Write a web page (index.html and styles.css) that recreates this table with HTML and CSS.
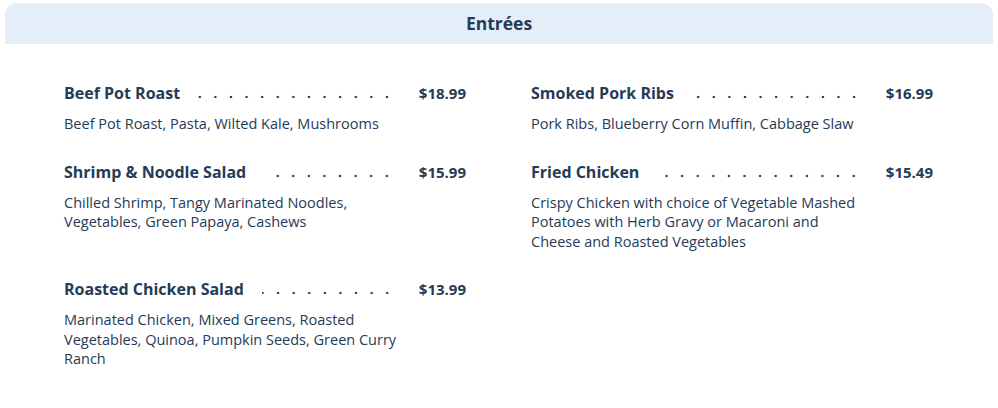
FILE: index.html
```html
<!DOCTYPE html>
<html lang="en">
<head>
    <meta charset="UTF-8">
    <meta name="viewport" content="width=device-width, initial-scale=1.0">
    <title>Entrées</title>
    <link rel="stylesheet" href="styles.css">
</head>
<body>
    <section class="menu-section">
        <header class="section-header">
            <h2>Entrées</h2>
        </header>
        <div class="menu-grid">
            <div class="menu-item">
                <div class="item-line">
                    <span class="item-name">Beef Pot Roast</span>
                    <span class="leader"></span>
                    <span class="item-price">$18.99</span>
                </div>
                <p class="item-desc">Beef Pot Roast, Pasta, Wilted Kale, Mushrooms</p>
            </div>
            <div class="menu-item">
                <div class="item-line">
                    <span class="item-name">Smoked Pork Ribs</span>
                    <span class="leader"></span>
                    <span class="item-price">$16.99</span>
                </div>
                <p class="item-desc">Pork Ribs, Blueberry Corn Muffin, Cabbage Slaw</p>
            </div>
            <div class="menu-item">
                <div class="item-line">
                    <span class="item-name">Shrimp &amp; Noodle Salad</span>
                    <span class="leader"></span>
                    <span class="item-price">$15.99</span>
                </div>
                <p class="item-desc">Chilled Shrimp, Tangy Marinated Noodles, Vegetables, Green Papaya, Cashews</p>
            </div>
            <div class="menu-item">
                <div class="item-line">
                    <span class="item-name">Fried Chicken</span>
                    <span class="leader"></span>
                    <span class="item-price">$15.49</span>
                </div>
                <p class="item-desc">Crispy Chicken with choice of Vegetable Mashed Potatoes with Herb Gravy or Macaroni and Cheese and Roasted Vegetables</p>
            </div>
            <div class="menu-item">
                <div class="item-line">
                    <span class="item-name">Roasted Chicken Salad</span>
                    <span class="leader"></span>
                    <span class="item-price">$13.99</span>
                </div>
                <p class="item-desc">Marinated Chicken, Mixed Greens, Roasted Vegetables, Quinoa, Pumpkin Seeds, Green Curry Ranch</p>
            </div>
        </div>
    </section>
</body>
</html>
```

FILE: styles.css
```css
/* Menu section */
body {
    margin: 0;
    padding: 3px 5px 0;
    background-color: #fff;
    color: #253b56;
    font-family: "Open Sans", "Noto Sans", sans-serif;
}

.section-header {
    background-color: #e5eef8;
    border-radius: 12px 12px 0 0;
    height: 41px;
    display: flex;
    align-items: center;
    justify-content: center;
}

.section-header h2 {
    margin: 0 0 2px;
    font-size: 17.5px;
    font-weight: 700;
}

.menu-grid {
    display: grid;
    grid-template-columns: 402px 402px;
    column-gap: 65px;
    row-gap: 27px;
    padding: 38px 0 0 59px;
}

.item-line {
    display: flex;
    align-items: baseline;
}

.item-name {
    font-size: 16px;
    font-weight: 700;
}

.item-price {
    font-size: 15px;
    font-weight: 700;
}

.leader {
    flex: 1;
    height: 4px;
    margin: 0 24px 0 18px;
    background-image: radial-gradient(circle, #253b56 1.1px, transparent 1.6px);
    background-size: 15.6px 4px;
    background-position: right bottom;
    background-repeat: repeat-x;
}

.item-desc {
    margin: 10px 0 0;
    font-size: 14.5px;
    line-height: 19.5px;
    max-width: 336px;
}
```
